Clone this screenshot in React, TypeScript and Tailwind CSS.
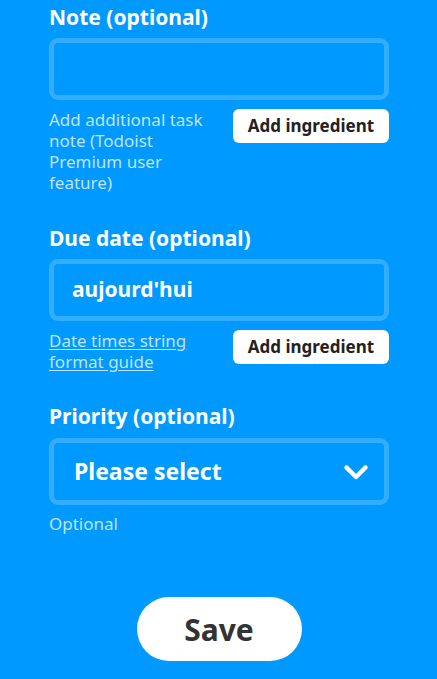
import React from "react";

function AddIngredient() {
  return (
    <button className="shrink-0 h-[34px] w-[156px] rounded-[6px] bg-white text-[17px] font-bold text-[#222]">
      Add ingredient
    </button>
  );
}

export default function App() {
  return (
    <div
      className="min-h-[679px] w-full bg-[#0099ff] text-white"
      style={{ fontFamily: "'Noto Sans', 'Open Sans', sans-serif" }}
    >
      <div className="ml-[49px] w-[340px] pt-[1px]">
        {/* Note */}
        <h2 className="text-[21px] font-bold leading-[32px]">Note (optional)</h2>
        <div className="mt-[5px] h-[62px] rounded-[9px] border-[5px] border-white/20" />
        <div className="mt-[9px] flex items-start justify-between">
          <p className="w-[172px] text-[17px] leading-[21px] text-white/75">
            Add additional task note (Todoist Premium user feature)
          </p>
          <AddIngredient />
        </div>

        {/* Due date */}
        <h2 className="mt-[29px] text-[21px] font-bold leading-[32px]">Due date (optional)</h2>
        <div className="mt-[5px] flex h-[62px] items-center rounded-[9px] border-[5px] border-white/20 px-[18px] text-[21px] font-bold">
          aujourd'hui
        </div>
        <div className="mt-[9px] flex items-start justify-between">
          <a className="w-[172px] text-[17px] leading-[21px] text-white/75 underline underline-offset-2">
            Date times string format guide
          </a>
          <AddIngredient />
        </div>

        {/* Priority */}
        <h2 className="mt-[28px] text-[21px] font-bold leading-[32px]">Priority (optional)</h2>
        <div className="mt-[6px] flex h-[67px] items-center justify-between rounded-[9px] border-[5px] border-white/20 pl-[20px] pr-[15px]">
          <span className="text-[23px] font-bold">Please select</span>
          <svg width="26" height="17" viewBox="0 0 26 17" fill="none" stroke="white" strokeWidth="4.5" strokeLinecap="round" strokeLinejoin="round" className="mt-[2px]">
            <path d="M3.5 3.5l9.5 9.5 9.5-9.5" />
          </svg>
        </div>
        <p className="mt-[8px] text-[17px] leading-[21px] text-white/75">Optional</p>

        <div className="mt-[63px] flex justify-center">
          <button className="h-[64px] w-[165px] rounded-full bg-white text-[30px] font-bold text-[#333]">
            Save
          </button>
        </div>
      </div>
    </div>
  );
}
